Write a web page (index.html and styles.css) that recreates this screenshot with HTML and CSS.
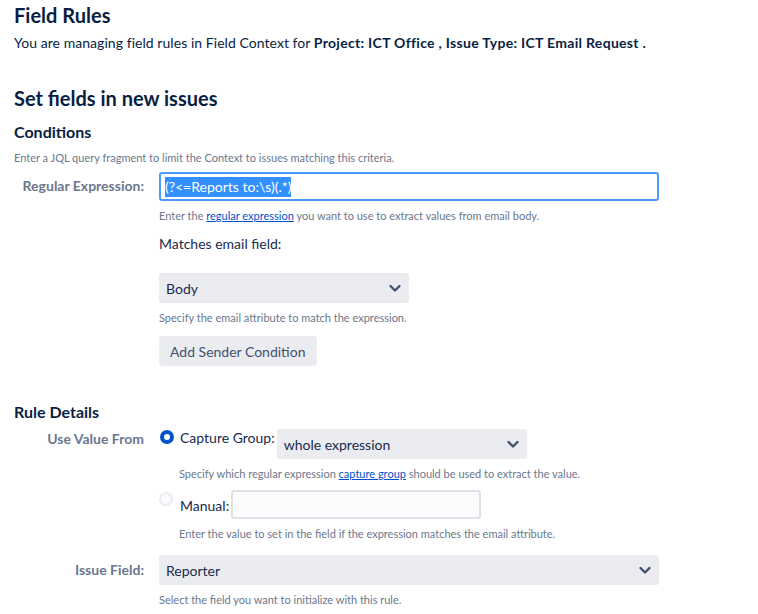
FILE: index.html
```html
<!DOCTYPE html>
<html>
<head>
<meta charset="utf-8">
<link rel="stylesheet" href="styles.css">
</head>
<body>
<h1 class="title">Field Rules</h1>
<p class="intro">You are managing field rules in Field Context for <b>Project: ICT Office , Issue Type: ICT Email Request .</b></p>

<h2 class="section">Set fields in new issues</h2>
<h3 class="sub">Conditions</h3>
<p class="help help-top">Enter a JQL query fragment to limit the Context to issues matching this criteria.</p>

<div class="row row-regex">
  <label class="lbl">Regular Expression:</label>
  <div class="field">
    <div class="text-input focused"><span class="sel">(?&lt;=Reports to:\s)(.*)</span></div>
    <p class="help">Enter the <a href="#">regular expression</a> you want to use to extract values from email body.</p>
    <div class="plain-label">Matches email field:</div>
    <div class="select select-small"><span>Body</span><svg class="chev" viewBox="0 0 16 16"><path d="M3.5 6 L8 10.5 L12.5 6" /></svg></div>
    <p class="help">Specify the email attribute to match the expression.</p>
    <button class="btn">Add Sender Condition</button>
  </div>
</div>

<h3 class="sub sub-rule">Rule Details</h3>
<div class="row row-use">
  <label class="lbl">Use Value From</label>
  <div class="field">
    <div class="opt">
      <span class="radio on"></span>
      <span class="opt-text">Capture Group:</span>
      <div class="select select-mid"><span>whole expression</span><svg class="chev" viewBox="0 0 16 16"><path d="M3.5 6 L8 10.5 L12.5 6" /></svg></div>
    </div>
    <p class="help indent">Specify which regular expression <a href="#">capture group</a> should be used to extract the value.</p>
    <div class="opt opt-manual">
      <span class="radio off"></span>
      <span class="opt-text manual-text">Manual:</span>
      <div class="text-input plain"></div>
    </div>
    <p class="help indent">Enter the value to set in the field if the expression matches the email attribute.</p>
  </div>
</div>

<div class="row row-issue">
  <label class="lbl">Issue Field:</label>
  <div class="field">
    <div class="select select-wide"><span>Reporter</span><svg class="chev" viewBox="0 0 16 16"><path d="M3.5 6 L8 10.5 L12.5 6" /></svg></div>
    <p class="help">Select the field you want to initialize with this rule.</p>
  </div>
</div>
</body>
</html>
```
FILE: styles.css
```css
html, body {
  margin: 0;
  padding: 0;
  background: #fff;
}
body {
  padding: 0 14px;
  font-family: "Lato", "Noto Sans", sans-serif;
  color: #172b4d;
  font-size: 14px;
  overflow: hidden;
}
.title {
  font-size: 20px;
  font-weight: 700;
  line-height: 24px;
  margin: 3px 0 0;
  color: #091e42;
}
.intro {
  margin: 6px 0 0;
  line-height: 20px;
  color: #091e42;
  letter-spacing: 0.05px;
}
.intro b { font-weight: 700; letter-spacing: 0.3px; }
.section {
  font-size: 20px;
  font-weight: 700;
  line-height: 24px;
  margin: 33px 0 0;
  color: #091e42;
}
.sub {
  font-size: 16px;
  font-weight: 700;
  line-height: 20px;
  margin: 12px 0 0;
  color: #091e42;
}
.help {
  font-size: 11px;
  line-height: 14px;
  color: #6b778c;
  margin: 8px 0 0;
}
.help a { color: #0052cc; text-decoration: underline; }
.help-top { margin-top: 9px; }
.row {
  display: flex;
  gap: 15px;
}
.lbl {
  width: 130px;
  flex: none;
  display: flex;
  justify-content: flex-end;
  white-space: nowrap;
  color: #6b778c;
  font-weight: 700;
  font-size: 14px;
  line-height: 20px;
}
.field {
  flex: 1;
  display: flex;
  flex-direction: column;
  align-items: flex-start;
}
.row-regex { margin-top: 7px; }
.row-regex .lbl { padding-top: 4px; }
.text-input {
  box-sizing: border-box;
  height: 29px;
  border-radius: 3px;
  display: flex;
  align-items: center;
}
.focused {
  width: 500px;
  height: 29px;
  border: 2px solid #4c9aff;
  padding: 0 4px;
  background: #fff;
}
.sel {
  background: #3390ff;
  color: #fff;
  line-height: 20px;
}
.plain-label {
  margin-top: 11px;
  font-size: 14px;
  line-height: 20px;
  color: #172b4d;
}
.select {
  box-sizing: border-box;
  height: 30px;
  background: #ebecf0;
  border-radius: 3px;
  display: flex;
  align-items: center;
  justify-content: space-between;
  padding: 0 6px 0 7px;
  color: #172b4d;
}
.chev {
  width: 16px;
  height: 16px;
  fill: none;
  stroke: #42526e;
  stroke-width: 2.4;
  stroke-linecap: round;
  stroke-linejoin: round;
}
.select-small { width: 250px; margin-top: 19px; }
.select-mid { width: 250px; }
.select-wide { width: 500px; }
.btn {
  margin-top: 11px;
  height: 30px;
  padding: 0 11px;
  border: none;
  border-radius: 3px;
  background: #ebecf0;
  font-family: inherit;
  font-size: 14px;
  color: #42526e;
}
.sub-rule { margin-top: 36px; }
.row-use { margin-top: 7px; }
.opt {
  display: flex;
  align-items: flex-start;
}
.radio {
  box-sizing: border-box;
  width: 14px;
  height: 14px;
  border-radius: 50%;
  flex: none;
  margin: 1px 6px 0 1px;
}
.radio.on {
  border: 4px solid #0052cc;
  background: #fff;
}
.radio.off {
  border: 2px solid #ebecf0;
  background: #fafbfc;
  margin-top: 2px;
  margin-left: 0;
  margin-right: 7px;
}
.opt-text {
  line-height: 18px;
  margin-right: 2px;
  color: #172b4d;
}
.indent { margin-left: 20px; }
.opt-manual { margin-top: 9px; }
.manual-text { margin-top: 7px; }
.plain {
  width: 250px;
  border: 2px solid #dfe1e6;
  background: #fafbfc;
}
.row-issue { margin-top: 14px; }
.row-issue .lbl { padding-top: 5px; }
```
